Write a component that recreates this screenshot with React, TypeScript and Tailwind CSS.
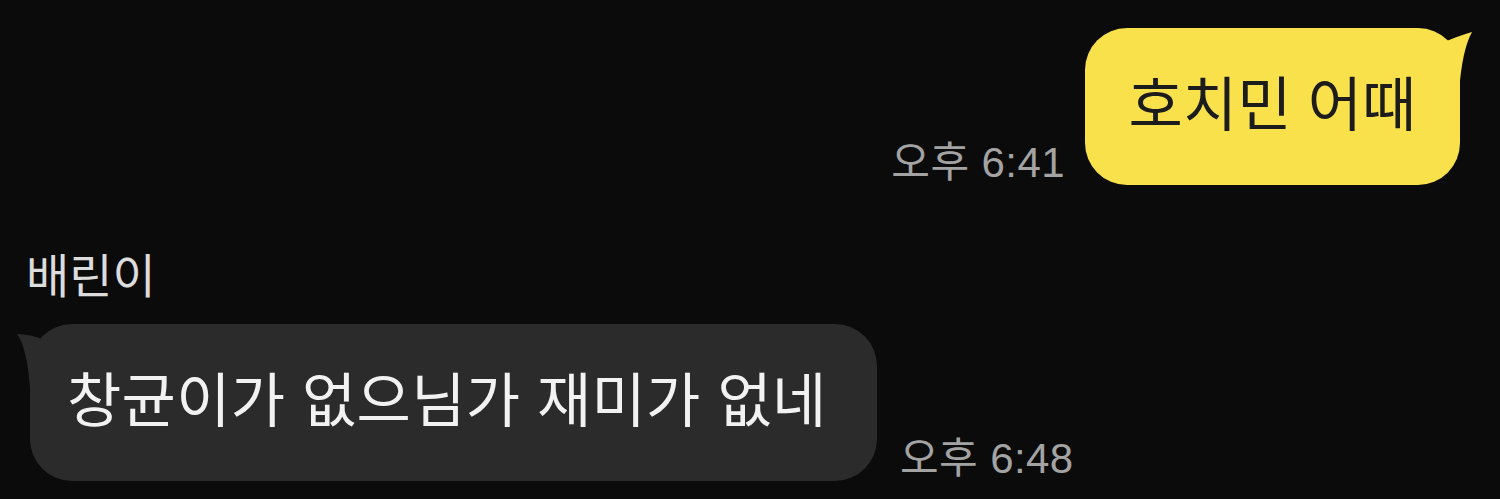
const font = { fontFamily: '"Liberation Sans", "Noto Sans CJK KR", sans-serif' };

const YellowTail = () => (
  <svg className="absolute right-[-16px] top-0" width="56" height="64" viewBox="0 0 56 64">
    <path d="M0 30 Q14 20 22 15 Q38 8 52 4 Q42 22 39 64 L0 64 Z" fill="#f9e14c" />
  </svg>
);

const GrayTail = () => (
  <svg className="absolute left-[-17px] top-0" width="56" height="64" viewBox="0 0 56 64">
    <path d="M56 30 Q42 20 34 17 Q18 10 4 10 Q14 24 17 64 L56 64 Z" fill="#2b2b2b" />
  </svg>
);

export default function App() {
  return (
    <div className="min-h-screen bg-[#0b0b0b] overflow-hidden" style={font}>
      <div className="flex flex-col pt-[28px]">
        <div className="flex justify-end items-end gap-[20px] pr-[40px]">
          <span className="text-[42px] leading-none text-[#a3a3a3] tracking-[0.01em] mb-[1px]">오후 6:41</span>
          <div className="relative h-[157px] w-[375px] rounded-[42px] bg-[#f9e14c] flex items-center justify-center">
            <YellowTail />
            <span className="relative text-[59px] leading-none text-[#1c1c1c]">호치민 어때</span>
          </div>
        </div>

        <div className="mt-[68px] pl-[26px] text-[47px] leading-none text-[#dcdcdc]">배린이</div>

        <div className="mt-[24px] flex items-end gap-[23px] pl-[30px]">
          <div className="relative h-[157px] w-[847px] rounded-[42px] bg-[#2b2b2b] flex items-center pl-[37px]">
            <GrayTail />
            <span className="relative text-[59px] leading-none text-[#f2f2f2] tracking-[0.005em]">
              창균이가 없으님가 재미가 없네
            </span>
          </div>
          <span className="text-[42px] leading-none text-[#a3a3a3] tracking-[0.01em] mb-[1px]">오후 6:48</span>
        </div>
      </div>
    </div>
  );
}
